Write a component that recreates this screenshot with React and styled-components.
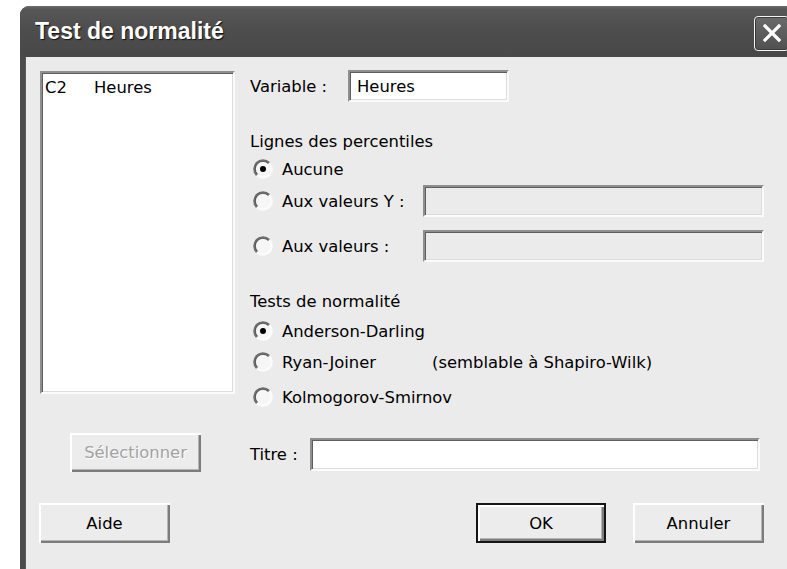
import React, { useId } from 'react';
import styled, { createGlobalStyle } from 'styled-components';

const Global = createGlobalStyle`
  html, body {
    margin: 0;
    padding: 0;
    background: #ffffff;
    overflow: hidden;
  }
  body {
    width: 787px;
    height: 569px;
  }
`;

const UI_FONT = `"DejaVu Sans", Tahoma, Verdana, sans-serif`;

/* ---------- window chrome ---------- */

const Window = styled.div`
  margin: 6px 0 0 20px;
  width: 780px;
  height: 563px;
  display: flex;
  flex-direction: column;
  border-radius: 9px 9px 0 0;
  overflow: hidden;
  background: #4a4a4a;
`;

const TitleBar = styled.div`
  flex: none;
  height: 51px;
  display: flex;
  align-items: center;
  padding: 0 11px 0 15px;
  background: linear-gradient(#6c6c6c 0, #575757 3px, #4d4d4d 45%, #484848 100%);
`;

const Title = styled.h1`
  flex: 1;
  margin: 0;
  font: bold 23px "Liberation Sans", Arial, sans-serif;
  color: #ffffff;
  text-shadow: 1px 1px 1px #111;
`;

const CloseButton = styled.button`
  flex: none;
  width: 35px;
  height: 35px;
  margin-top: 3px;
  padding: 0;
  display: flex;
  align-items: center;
  justify-content: center;
  border: 1.5px solid #f4f4f4;
  border-radius: 4px;
  background: linear-gradient(#6a6a6a, #505050);
  box-shadow: inset 0 0 0 1px #3a3a3a;
`;

const Body = styled.div`
  flex: 1;
  margin-left: 5px;
  padding: 13px 0 0 15px;
  background: #ebebeb;
  font: 16.4px ${UI_FONT};
  color: #000;
  box-shadow: inset 1px 0 0 #5c5c5c;
`;

/* ---------- layout ---------- */

const Content = styled.div`
  width: 724px;
  display: grid;
  grid-template-columns: 195px 1fr;
  column-gap: 15px;
  row-gap: 26px;
`;

const Options = styled.div`
  display: flex;
  flex-direction: column;
`;

const Row = styled.div`
  display: flex;
  align-items: center;
  height: ${(p) => p.$h || 20}px;
  margin-top: ${(p) => p.$mt || 0}px;
`;

const Heading = styled.div`
  line-height: 20px;
  margin-top: ${(p) => p.$mt || 0}px;
`;

const Label = styled.span`
  flex: none;
  white-space: nowrap;
  width: ${(p) => (p.$w ? `${p.$w}px` : 'auto')};
`;

/* ---------- controls ---------- */

const sunken = `
  box-sizing: border-box;
  border-style: solid;
  border-width: 2px;
  border-color: #8e8e8e #fbfbfb #fbfbfb #8e8e8e;
  box-shadow: inset 1px 1px 0 #5e5e5e, inset -1px -1px 0 #dddddd;
`;

const ListBox = styled.div`
  ${sunken}
  margin-top: 1px;
  height: 323px;
  background: #ffffff;
  padding: 5px 3px;
`;

const ListItem = styled.div`
  display: flex;
  line-height: 20px;
`;

const ListCell = styled.span`
  width: ${(p) => (p.$w ? `${p.$w}px` : 'auto')};
`;

const Field = styled.div`
  ${sunken}
  height: ${(p) => p.$h || 32}px;
  width: ${(p) => (p.$w ? `${p.$w}px` : 'auto')};
  flex: ${(p) => (p.$w ? 'none' : '1')};
  margin-right: ${(p) => p.$mr || 0}px;
  background: ${(p) => (p.$disabled ? '#ebebeb' : '#ffffff')};
  padding: 0 7px;
  display: flex;
  align-items: center;
`;

const Button = styled.button`
  box-sizing: border-box;
  width: ${(p) => p.$w}px;
  height: ${(p) => p.$h || 40}px;
  margin-left: ${(p) => p.$ml || 0}px;
  padding: 0;
  font: 16.4px ${UI_FONT};
  color: ${(p) => (p.disabled ? '#a2a2a2' : '#000')};
  text-shadow: ${(p) => (p.disabled ? '1px 1px 0 #fff' : 'none')};
  background: #ececec;
  border: ${(p) => (p.$default ? '2px solid #151515' : '0')};
  box-shadow: inset 2px 2px 0 #ffffff, inset -2px -2px 0 #7c7c7c,
    inset -3px -3px 0 #b4b4b4;
`;

const Footer = styled.div`
  display: flex;
  width: 724px;
  margin-top: 31px;
`;

const Spacer = styled.div`
  flex: 1;
`;

const RadioMark = styled.svg`
  flex: none;
  width: 20px;
  height: 20px;
  margin: 0 9px 0 3px;
`;

function Radio({ checked }) {
  const id = useId();
  return (
    <RadioMark viewBox="0 0 20 20">
      <defs>
        <linearGradient id={id} x1="0" y1="0" x2="1" y2="1">
          <stop offset="0.47" stopColor="#6e6e6e" />
          <stop offset="0.53" stopColor="#fbfbfb" />
        </linearGradient>
      </defs>
      <circle cx="10" cy="10" r="8.6" fill="#f6f6f6" stroke={`url(#${id})`} strokeWidth="2.4" />
      <path d="M4.6 15.2 A7.2 7.2 0 0 1 15.2 4.6" fill="none" stroke="#3c3c3c" strokeWidth="1" opacity="0.6" />
      {checked && <circle cx="10" cy="10" r="3" fill="#000" />}
    </RadioMark>
  );
}

export default function App() {
  return (
    <>
      <Global />
      <Window>
        <TitleBar>
          <Title>Test de normalité</Title>
          <CloseButton aria-label="Fermer">
            <svg width="20" height="20" viewBox="0 0 20 20">
              <path d="M3 3 L17 17 M17 3 L3 17" stroke="#fff" strokeWidth="3.2" strokeLinecap="square" />
            </svg>
          </CloseButton>
        </TitleBar>
        <Body>
          <Content>
            <ListBox>
              <ListItem>
                <ListCell $w={49}>C2</ListCell>
                <ListCell>Heures</ListCell>
              </ListItem>
            </ListBox>

            <Options>
              <Row $h={32}>
                <Label $w={98}>Variable :</Label>
                <Field $w={161}>Heures</Field>
              </Row>

              <Heading $mt={30}>Lignes des percentiles</Heading>
              <Row $mt={7}>
                <Radio checked />
                <Label>Aucune</Label>
              </Row>
              <Row $mt={6} $h={32}>
                <Radio />
                <Label $w={141}>Aux valeurs Y :</Label>
                <Field $disabled />
              </Row>
              <Row $mt={13} $h={32}>
                <Radio />
                <Label $w={141}>Aux valeurs :</Label>
                <Field $disabled />
              </Row>

              <Heading $mt={30}>Tests de normalité</Heading>
              <Row $mt={9}>
                <Radio checked />
                <Label>Anderson-Darling</Label>
              </Row>
              <Row $mt={11}>
                <Radio />
                <Label $w={150}>Ryan-Joiner</Label>
                <Label>(semblable à Shapiro-Wilk)</Label>
              </Row>
              <Row $mt={15}>
                <Radio />
                <Label>Kolmogorov-Smirnov</Label>
              </Row>
            </Options>

            <div>
              <Button $w={131} $h={39} $ml={30} disabled>
                Sélectionner
              </Button>
            </div>
            <Row $h={33} $mt={5}>
              <Label $w={60}>Titre :</Label>
              <Field $h={33} $mr={4} />
            </Row>
          </Content>

          <Footer>
            <Button $w={131} $ml={-1}>Aide</Button>
            <Spacer />
            <Button $w={130} $default>OK</Button>
            <Button $w={131} $ml={27}>Annuler</Button>
          </Footer>
        </Body>
      </Window>
    </>
  );
}
